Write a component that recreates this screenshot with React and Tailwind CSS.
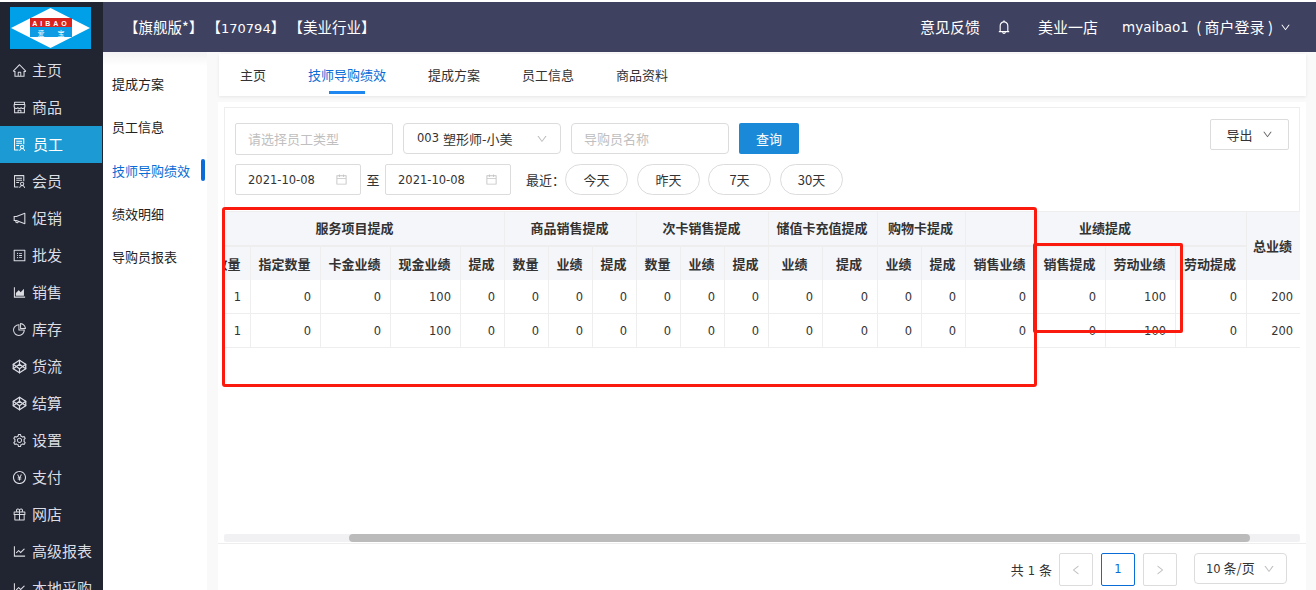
import React from "react";
import {
  AiOutlineHome, AiOutlineShop, AiOutlineSolution, AiOutlineNotification, AiOutlineProfile,
  AiOutlineAreaChart, AiOutlinePieChart, AiOutlineSetting, AiOutlinePayCircle,
  AiOutlineGift, AiOutlineLineChart, AiOutlineBell, AiOutlineCalendar, AiOutlineDown, AiOutlineLeft, AiOutlineRight,
} from "react-icons/ai";
import { Codepen } from "lucide-react";

const menu = [
  ["主页", AiOutlineHome], ["商品", AiOutlineShop], ["员工", AiOutlineSolution, true], ["会员", AiOutlineSolution],
  ["促销", AiOutlineNotification], ["批发", AiOutlineProfile], ["销售", AiOutlineAreaChart], ["库存", AiOutlinePieChart],
  ["货流", Codepen], ["结算", Codepen], ["设置", AiOutlineSetting], ["支付", AiOutlinePayCircle],
  ["网店", AiOutlineGift], ["高级报表", AiOutlineLineChart], ["本地采购", AiOutlineLineChart],
];

const cols = ["w-[44px]","w-[70px]","w-[70px]","w-[70px]","w-[44px]","w-[44px]","w-[44px]","w-[44px]","w-[44px]","w-[44px]","w-[44px]","w-[54px]","w-[55px]","w-[44px]","w-[44px]","w-[70px]","w-[70px]","w-[70px]","w-[70px]","w-[54px]"];
const sub = ["数量","指定数量","卡金业绩","现金业绩","提成","数量","业绩","提成","数量","业绩","提成","业绩","提成","业绩","提成","销售业绩","销售提成","劳动业绩","劳动提成"];
const vals = ["1","0","0","100","0","0","0","0","0","0","0","0","0","0","0","0","0","100","0"];
const groups = [["服务项目提成",5],["商品销售提成",3],["次卡销售提成",3],["储值卡充值提成",2],["购物卡提成",2],["业绩提成",4]];

function Logo() {
  return (
    <svg width="81" height="42" viewBox="0 0 81 42" className="block">
      <rect width="81" height="42" fill="#00a0e9" />
      <polygon points="40.5,1 80,21 40.5,41 1,21" fill="#ffffff" />
      <rect x="20" y="11" width="42" height="9" fill="#d8231f" />
      <rect x="20" y="20" width="42" height="10" fill="#0d9be3" />
      <text x="41" y="18.5" textAnchor="middle" fill="#fff" fontSize="7" letterSpacing="3" fontFamily="Liberation Sans, sans-serif" fontWeight="700">AIBAO</text>
      <text x="31" y="28.5" textAnchor="middle" fill="#e8f6ff" fontSize="7" fontFamily="Noto Sans CJK SC, sans-serif">爱</text>
      <text x="51" y="28.5" textAnchor="middle" fill="#e8f6ff" fontSize="7" fontFamily="Noto Sans CJK SC, sans-serif">宝</text>
    </svg>
  );
}

function Sidebar() {
  return (
    <aside className="w-[103px] shrink-0 bg-[#212431] overflow-hidden h-[588px]">
      <div className="pl-[10px] pt-[5px] h-[50px]"><Logo /></div>
      <nav>
        {menu.map(([label, Icon, active]) => (
          <div key={label} className={`h-[37px] flex items-center pl-[12px] gap-[5px] text-[15px] whitespace-nowrap text-[#dcdde3] ${active ? "bg-[#1b9ad3] w-[102px] text-white" : ""}`}>
            <Icon size={15} className="shrink-0" />
            <span className={active ? "pl-[1px]" : ""}>{label}</span>
          </div>
        ))}
      </nav>
    </aside>
  );
}

const num = "font-['DejaVu_Sans','Noto_Sans_CJK_SC',sans-serif] text-[11.5px]";

function Header() {
  return (
    <header className="h-[50px] bg-[#3e4160] flex items-center text-white pl-[21px] pr-[25px] text-[15px] whitespace-nowrap">
      <span className="flex-1 text-[14.5px]">【旗舰版*】 【<span className="font-['DejaVu_Sans',sans-serif] text-[13px]">170794</span>】 【美业行业】</span>
      <span>意见反馈</span>
      <AiOutlineBell className="ml-[16px] text-[16px]" />
      <span className="ml-[26px]">美业一店</span>
      <span className="ml-[24px] w-[151px] flex items-center justify-between">
        <span className="font-['DejaVu_Sans',sans-serif] text-[13.5px]">myaibao1</span>
        <span>( 商户登录 )</span>
      </span>
      <AiOutlineDown className="ml-[7px] text-[11px]" />
    </header>
  );
}

function SubNav() {
  const items = ["提成方案","员工信息","技师导购绩效","绩效明细","导购员报表"];
  return (
    <div className="w-[104px] shrink-0 bg-gradient-to-b from-[#f3f3f5] to-white to-[14px] pt-[10px] h-[538px]">
      {items.map((t, i) => (
        <div key={t} className={`h-[43.3px] flex items-center pl-[9px] text-[13px] whitespace-nowrap ${i === 2 ? "text-[#0a6cd6] justify-between pr-[2px]" : "text-[#222]"}`}>
          <span className={i === 2 ? "pt-[1px]" : ""}>{t}</span>
          {i === 2 && <span className="w-[4px] h-[22px] rounded bg-[#0a6cd6]" />}
        </div>
      ))}
    </div>
  );
}

function Tabs() {
  const tabs = ["主页","技师导购绩效","提成方案","员工信息","商品资料"];
  return (
    <div className="h-[42px] mt-[2px] mr-[10px] ml-[12px] bg-white shadow-[0_1px_3px_rgba(0,0,0,0.08)] flex pl-[21px] gap-[42px] text-[13px] text-[#333]">
      {tabs.map((t, i) => (
        <div key={t} className={`relative h-full flex items-center whitespace-nowrap pb-[1px] ${i === 1 ? "text-[#0a6cd6]" : ""}`}>
          {t}
          {i === 1 && <span className="absolute left-[21px] top-[37px] w-[36px] h-[3px] bg-[#1e88f0]" />}
        </div>
      ))}
    </div>
  );
}

function DateBox() {
  return (
    <div className={`w-[126px] h-[31px] border border-[#dcdcdc] rounded-[2px] flex items-center justify-between pl-[12px] pr-[12px] text-[#333] ${num}`}>
      <span className="pt-[2px]">2021-10-08</span>
      <AiOutlineCalendar className="text-[13px] text-[#c4c4c4]" />
    </div>
  );
}

function Pill({ children, className }) {
  return <div className={`w-[63px] h-[31px] rounded-full border border-[#dcdcdc] flex items-center justify-center text-[13px] text-[#333] ${className}`}>{children}</div>;
}

function Filters() {
  return (
    <div className="h-[105px] mx-[6px] border border-[#eeeeee] flex justify-between pl-[10px] pr-[10px]">
      <div className="pt-[15px]">
        <div className="flex gap-[10px] items-start">
          <div className="w-[158px] h-[32px] border border-[#dcdcdc] rounded-[2px] flex items-center pl-[12px] text-[13px] text-[#c0c0c0]">请选择员工类型</div>
          <div className="w-[158px] h-[31px] border border-[#dcdcdc] rounded-[4px] flex items-center justify-between pl-[13px] pr-[12px] text-[13px] text-[#333] whitespace-nowrap">
            <span className="flex items-center gap-[4px]"><span className={`${num} pt-[1px]`}>003</span>塑形师-小美</span>
            <AiOutlineDown className="text-[12px] text-[#bdbdbd]" />
          </div>
          <div className="w-[158px] h-[31px] border border-[#dcdcdc] rounded-[4px] flex items-center pl-[12px] text-[13px] text-[#c0c0c0]">导购员名称</div>
          <div className="w-[60px] h-[31px] bg-[#1a8ad8] rounded-[2px] flex items-center justify-center text-[13px] text-white">查询</div>
        </div>
        <div className="flex items-center mt-[9px]">
          <DateBox />
          <span className="w-[24px] text-center text-[13px] text-[#333]">至</span>
          <DateBox />
          <span className="ml-[15px] w-[39px] text-[13px] text-[#333] whitespace-nowrap">最近：</span>
          <Pill>今天</Pill>
          <Pill className="ml-[9px]">昨天</Pill>
          <Pill className="ml-[8px]">7天</Pill>
          <Pill className="ml-[9px]">30天</Pill>
        </div>
      </div>
      <div className="mt-[11px] w-[79px] h-[31px] border border-[#dcdcdc] rounded-[2px] flex items-center justify-center gap-[9px] text-[13px] text-[#333]">
        导出 <AiOutlineDown className="text-[11px] text-[#666]" />
      </div>
    </div>
  );
}

function DataTable() {
  const th = "bg-[#f5f6fa] border-r border-[#eeeeee] font-bold text-[13px] text-[#333] text-center whitespace-nowrap pt-0 pl-0 pr-[2px]";
  return (
    <div className="mx-[6px] w-[1076px] overflow-hidden">
      <table className="table-fixed border-separate border-spacing-0 w-[1093px] ml-[-17px]">
        <colgroup>
          {cols.map((c, i) => <col key={i} className={c} />)}
        </colgroup>
        <thead>
          <tr>
            {groups.map(([g, n]) => (
              <th key={g} colSpan={n} className={`${th} h-[35px] border-b-2 pb-[2px] ${g === "业绩提成" ? "border-r-0" : ""}`}>{g}</th>
            ))}
            <th rowSpan={2} className={`${th} border-r-0 border-l`}>总业绩</th>
          </tr>
          <tr>
            {sub.map((s, i) => (
              <th key={i} className={`${th} h-[33px] pb-0 ${i === 18 ? "border-r-0" : ""}`}>{s}</th>
            ))}
          </tr>
        </thead>
        <tbody>
          {[0, 1].map((r) => (
            <tr key={r}>
              {vals.map((v, i) => (
                <td key={i} className={`h-[34px] border-r border-b border-[#eeeeee] text-right pr-[9px] pt-[3px] text-[#333] ${i === 18 ? "border-r-0" : ""} ${num}`}>{v}</td>
              ))}
              <td className={`border-b border-l border-[#eeeeee] text-right pr-[7px] pt-[3px] text-[#333] ${num}`}>200</td>
            </tr>
          ))}
        </tbody>
      </table>
    </div>
  );
}

function Pager() {
  const box = "w-[34px] h-[33px] border rounded-[2px] flex items-center justify-center";
  return (
    <div className="border-t border-[#eeeeee] h-[47px] flex items-start justify-end pt-[9px] pr-[19px] text-[#333]">
      <span className="text-[13px] leading-[33px] mr-[7px] whitespace-nowrap">共<span className={`${num} mx-[4px]`}>1</span>条</span>
      <div className={`${box} border-[#dcdcdc] text-[#c0c0c0] text-[12px]`}><AiOutlineLeft /></div>
      <div className={`${box} ml-[8px] border-[#0a6cd6] text-[#0a6cd6] ${num}`}>1</div>
      <div className={`${box} ml-[8px] border-[#dcdcdc] text-[#c0c0c0] text-[12px]`}><AiOutlineRight /></div>
      <div className="ml-[17px] w-[93px] h-[31px] border border-[#dcdcdc] rounded-[4px] flex items-center justify-between pl-[11px] pr-[11px] text-[13px] whitespace-nowrap">
        <span><span className={num}>10</span> 条/页</span>
        <AiOutlineDown className="text-[12px] text-[#bdbdbd]" />
      </div>
    </div>
  );
}

export default function App() {
  return (
    <div className="relative w-[1316px] h-[590px] overflow-hidden bg-white pt-[2px] font-['Noto_Sans_CJK_SC',sans-serif] [text-spacing-trim:space-all]">
      <div className="flex h-[588px]">
        <Sidebar />
        <div className="flex-1 min-w-0 flex flex-col">
          <Header />
          <div className="flex flex-1 min-h-0">
            <SubNav />
            <main className="flex-1 min-w-0 bg-[#f9f9fa]">
              <Tabs />
              <div className="mt-[6px] ml-[11px] mr-[10px] h-[488px] bg-white pt-[5px] w-[1088px]">
                <Filters />
                <DataTable />
                <div className="mt-[186px] mx-[6px] h-[8px] rounded-[2px] bg-[#f1f1f4]">
                  <div className="ml-[125px] w-[901px] h-full rounded-full bg-[#bbbbbb]" />
                </div>
                <div className="h-[1px]" />
                <Pager />
              </div>
            </main>
          </div>
        </div>
      </div>
      <div className="absolute left-[222px] top-[207px] w-[815px] h-[180px] border-[3px] border-[#fb1a0e] rounded-[3px]" />
      <div className="absolute left-[1033px] top-[243px] w-[150px] h-[90px] border-[3px] border-[#fb1a0e] rounded-[2px]" />
    </div>
  );
}
